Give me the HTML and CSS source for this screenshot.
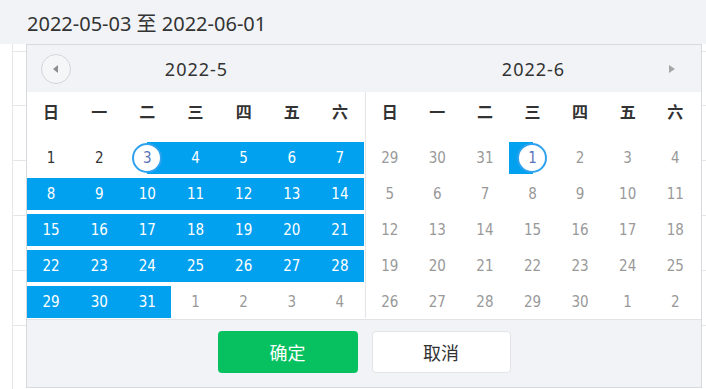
FILE: index.html
```html
<!DOCTYPE html>
<html lang="zh-CN">
<head>
<meta charset="utf-8">
<title>日期范围选择</title>
<link rel="stylesheet" href="styles.css">
</head>
<body>
<div class="page">
  <div class="topbar"><span class="range-text">2022-05-03 至 2022-06-01</span></div>
  <div class="bg-table">
    <div class="bg-row first"></div>
    <div class="bg-row"></div>
    <div class="bg-row"></div>
    <div class="bg-row"></div>
    <div class="bg-row"></div>
    <div class="bg-row"></div>
  </div>

  <div class="picker">
    <div class="picker-head">
      <div class="head-half head-left">
        <span class="nav-prev"><span class="tri-left"></span></span>
        <span class="month-title">2022-5</span>
        <span></span>
      </div>
      <div class="head-half head-right">
        <span></span>
        <span class="month-title">2022-6</span>
        <span class="nav-next"><span class="tri-right"></span></span>
      </div>
    </div>

    <div class="picker-body">
      <div class="month month-left">
        <div class="weekdays"><span>日</span><span>一</span><span>二</span><span>三</span><span>四</span><span>五</span><span>六</span></div>
        <div class="days">
          <span class="day">1</span><span class="day">2</span><span class="day start"><span class="ring">3</span></span><span class="day in">4</span><span class="day in">5</span><span class="day in">6</span><span class="day in">7</span>
          <span class="day in">8</span><span class="day in">9</span><span class="day in">10</span><span class="day in">11</span><span class="day in">12</span><span class="day in">13</span><span class="day in">14</span>
          <span class="day in">15</span><span class="day in">16</span><span class="day in">17</span><span class="day in">18</span><span class="day in">19</span><span class="day in">20</span><span class="day in">21</span>
          <span class="day in">22</span><span class="day in">23</span><span class="day in">24</span><span class="day in">25</span><span class="day in">26</span><span class="day in">27</span><span class="day in">28</span>
          <span class="day in">29</span><span class="day in">30</span><span class="day in">31</span><span class="day muted">1</span><span class="day muted">2</span><span class="day muted">3</span><span class="day muted">4</span>
        </div>
      </div>
      <div class="month month-right">
        <div class="weekdays"><span>日</span><span>一</span><span>二</span><span>三</span><span>四</span><span>五</span><span>六</span></div>
        <div class="days">
          <span class="day muted">29</span><span class="day muted">30</span><span class="day muted">31</span><span class="day end"><span class="ring">1</span></span><span class="day muted">2</span><span class="day muted">3</span><span class="day muted">4</span>
          <span class="day muted">5</span><span class="day muted">6</span><span class="day muted">7</span><span class="day muted">8</span><span class="day muted">9</span><span class="day muted">10</span><span class="day muted">11</span>
          <span class="day muted">12</span><span class="day muted">13</span><span class="day muted">14</span><span class="day muted">15</span><span class="day muted">16</span><span class="day muted">17</span><span class="day muted">18</span>
          <span class="day muted">19</span><span class="day muted">20</span><span class="day muted">21</span><span class="day muted">22</span><span class="day muted">23</span><span class="day muted">24</span><span class="day muted">25</span>
          <span class="day muted">26</span><span class="day muted">27</span><span class="day muted">28</span><span class="day muted">29</span><span class="day muted">30</span><span class="day muted">1</span><span class="day muted">2</span>
        </div>
      </div>
    </div>

    <div class="picker-foot">
      <button class="btn btn-ok">确定</button>
      <button class="btn btn-cancel">取消</button>
    </div>
  </div>
</div>
</body>
</html>
```

FILE: styles.css
```css
* { box-sizing: border-box; }

body {
  margin: 0;
  width: 706px;
  height: 389px;
  overflow: hidden;
  background: #fff;
  color: #333;
  font-family: "Noto Sans", "Noto Sans CJK SC", sans-serif;
}

.page {
  position: relative;
  height: 389px;
  overflow: hidden;
}

.topbar {
  height: 44px;
  background: #f2f3f7;
  display: flex;
  align-items: center;
  padding-left: 27px;
  font-size: 20px;
  color: #333;
}

.bg-table {
  margin-left: 12px;
  border-left: 1px solid #e6e6e6;
  padding-top: 7px;
  height: 345px;
  overflow: hidden;
}

.bg-row {
  height: 55px;
  border-top: 1px solid #e6e6e6;
}

.bg-row.first {
  height: 54px;
}

.picker {
  position: absolute;
  left: 26px;
  top: 44px;
  width: 676px;
  border: 1px solid #d8d9de;
  background: #f2f3f7;
}

.picker-head {
  display: flex;
  height: 47px;
}

.head-half {
  display: grid;
  grid-template-columns: 60px 1fr 60px;
  align-items: center;
}

.head-left { width: 339px; }
.head-right { width: 335px; }

.month-title {
  text-align: center;
  font-size: 18px;
  letter-spacing: 1px;
  color: #333;
}

.nav-prev {
  margin-left: 14px;
  width: 30px;
  height: 30px;
  border: 1px solid #d4d5d9;
  border-radius: 50%;
  background: #f5f6f8;
  display: flex;
  align-items: center;
  justify-content: center;
}

.tri-left {
  width: 0;
  height: 0;
  border-top: 4.5px solid transparent;
  border-bottom: 4.5px solid transparent;
  border-right: 5px solid #8e8e8e;
  margin-left: -2px;
}

.nav-next {
  margin-left: 28px;
  display: flex;
  align-items: center;
}

.tri-right {
  width: 0;
  height: 0;
  border-top: 4.5px solid transparent;
  border-bottom: 4.5px solid transparent;
  border-left: 6px solid #a6a6a6;
}

.picker-body {
  display: flex;
  background: #fff;
  padding-bottom: 1px;
}

.month-left {
  width: 339px;
  padding-right: 1px;
  border-right: 1px solid #e4e5e8;
}

.month-right {
  width: 335px;
  padding-right: 2px;
}

.weekdays {
  display: grid;
  grid-template-columns: repeat(7, 1fr);
  height: 38px;
  align-items: center;
  font-family: "Noto Sans CJK SC", sans-serif;
  font-size: 16px;
  font-weight: 600;
  color: #333;
  text-align: center;
}

.days {
  margin-top: 12px;
  display: grid;
  grid-template-columns: repeat(7, 1fr);
  grid-auto-rows: 32px;
  row-gap: 4px;
  font-family: "DejaVu Sans Condensed", "DejaVu Sans", sans-serif;
  font-size: 15px;
}

.day {
  display: flex;
  align-items: center;
  justify-content: center;
  color: #333;
}

.day.muted { color: #999; }

.day.in {
  background: #02a1ef;
  color: #fff;
}

.day.start {
  background: linear-gradient(to right, transparent 50%, #02a1ef 50%);
}

.day.end {
  background: linear-gradient(to right, #02a1ef 50%, transparent 50%);
}

.ring {
  width: 30px;
  height: 30px;
  border-radius: 50%;
  border: 2px solid #2ea2ee;
  background: #fff;
  color: #5a74b8;
  display: flex;
  align-items: center;
  justify-content: center;
}

.picker-foot {
  display: flex;
  justify-content: center;
  gap: 14px;
  padding: 11px 0 14px;
  border-top: 1px solid #e2e3e6;
}

.btn {
  height: 42px;
  border-radius: 4px;
  font-family: "Noto Sans CJK SC", sans-serif;
  font-size: 18px;
  cursor: pointer;
}

.btn-ok {
  width: 140px;
  border: none;
  background: #07c160;
  color: #fff;
}

.btn-cancel {
  width: 139px;
  border: 1px solid #e3e4e7;
  background: #fff;
  color: #333;
}
```
